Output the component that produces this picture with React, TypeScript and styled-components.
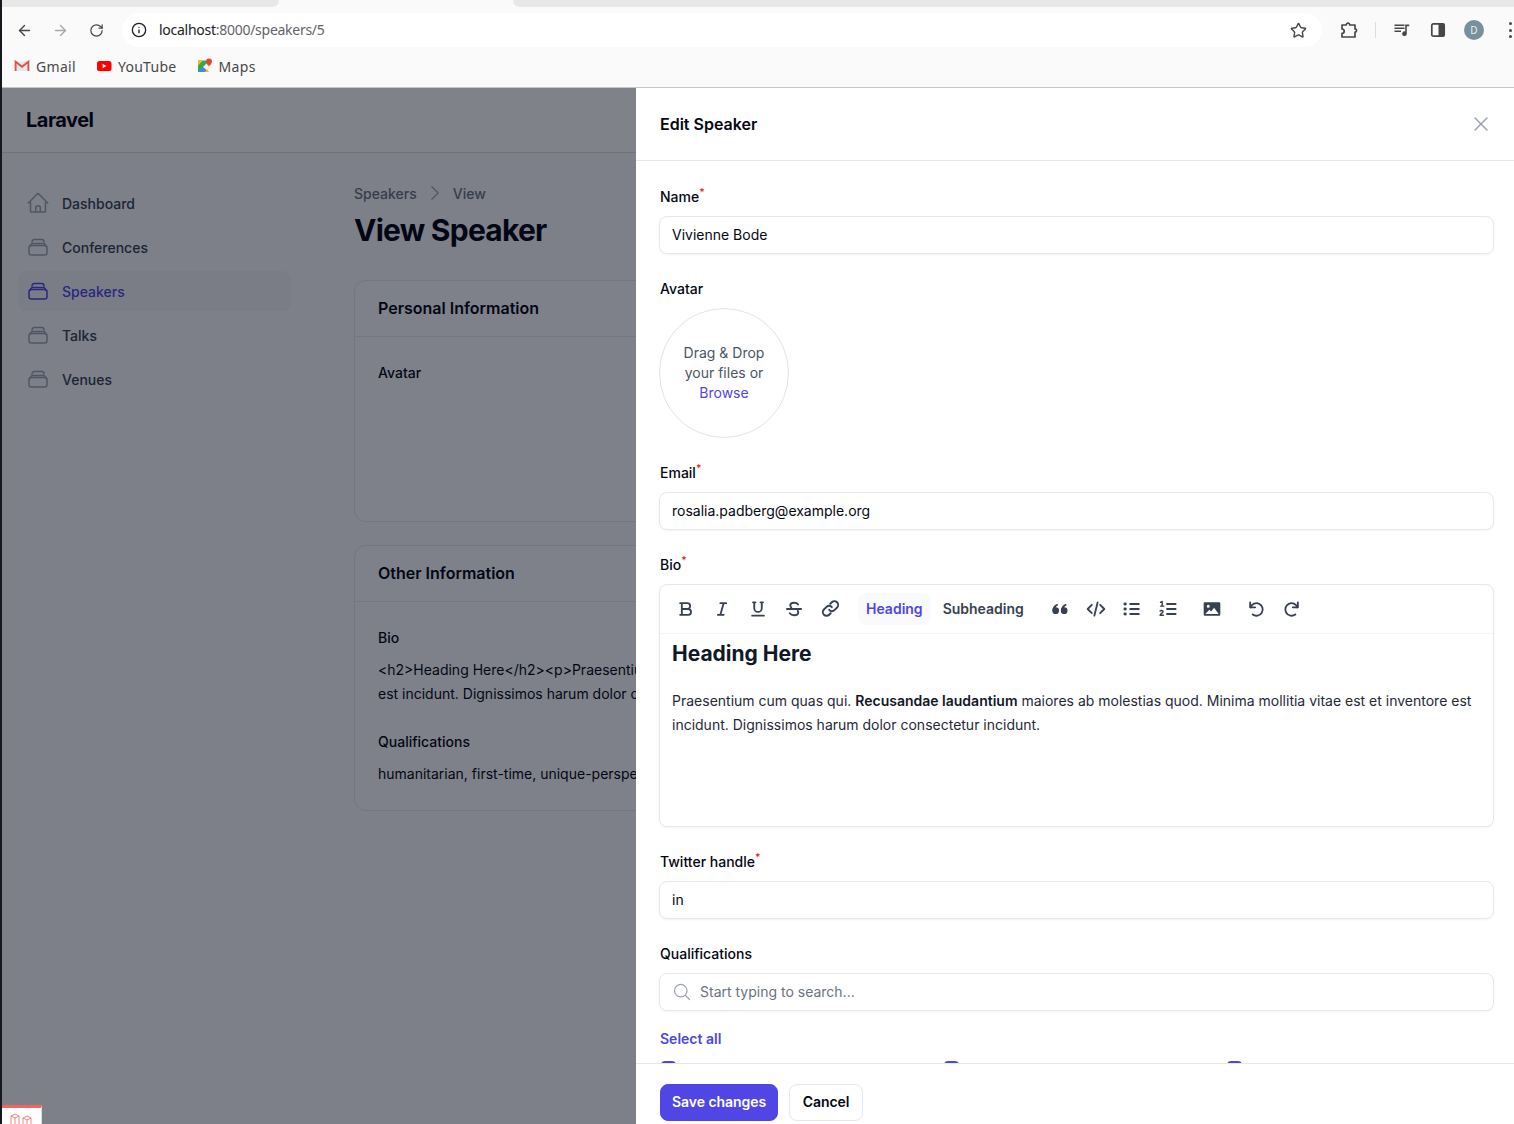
import styled, { createGlobalStyle } from 'styled-components'
import { ReactNode } from 'react'
import { ArrowLeft, ArrowRight, RotateCw, Info, Star } from 'lucide-react'
import {
    HiOutlineHome,
    HiOutlineXMark,
    HiOutlineMagnifyingGlass,
    HiOutlineChevronRight,
} from 'react-icons/hi2'

const GlobalStyle = createGlobalStyle`
    html, body {
        margin: 0;
        padding: 0;
        height: 100%;
        overflow: hidden;
        background: #16181d;
    }
    * {
        box-sizing: border-box;
    }
`

const Screen = styled.div`
    width: 1514px;
    height: 1124px;
    display: flex;
    flex-direction: column;
    overflow: hidden;
    border-left: 2px solid #16181d;
    font-family: Inter, "Liberation Sans", sans-serif;
    color: #030712;
`

/* browser chrome */
const TabStrip = styled.div`
    height: 7px;
    background: #fafafa;
    display: flex;
    justify-content: space-between;
    flex-shrink: 0;
`

const TabPiece = styled.div<{ $w: number; $right?: boolean }>`
    width: ${p => p.$w}px;
    height: 7px;
    background: #e8e8e8;
    border-radius: ${p => (p.$right ? '0 0 0 8px' : '0 0 8px 0')};
`

const Toolbar = styled.div`
    height: 46px;
    background: #fafafa;
    display: flex;
    align-items: center;
    padding: 6px 0 6px 4px;
    flex-shrink: 0;
`

const NavButton = styled.div<{ $muted?: boolean }>`
    width: 36px;
    height: 36px;
    display: flex;
    align-items: center;
    justify-content: center;
    color: ${p => (p.$muted ? '#a8a8a8' : '#474747')};
`

const Omnibox = styled.div`
    width: 1200px;
    height: 34px;
    margin-left: 8px;
    background: #ffffff;
    border-radius: 17px;
    display: flex;
    align-items: center;
    padding: 0 15px 0 9px;
    flex-shrink: 0;
`

const Url = styled.div`
    margin-left: 12px;
    padding-bottom: 2px;
    flex: 1;
    font-family: "Noto Sans", sans-serif;
    font-size: 14px;
    letter-spacing: -0.27px;
    color: #202124;

    span {
        color: #5f6368;
    }
`

const ExtIcons = styled.div`
    display: flex;
    align-items: center;
    margin-left: 9px;
    flex-shrink: 0;
`

const ChromeIcon = styled.div`
    width: 36px;
    height: 36px;
    display: flex;
    align-items: center;
    justify-content: center;
    color: #474747;
`

const Separator = styled.div`
    width: 1px;
    height: 16px;
    margin: 0 8px;
    background: #dcdcdc;
`

const Profile = styled.div`
    width: 20px;
    height: 20px;
    border-radius: 50%;
    background: #78909c;
    color: #e8eef0;
    font-family: "Noto Sans", sans-serif;
    font-size: 10px;
    display: flex;
    align-items: center;
    justify-content: center;
`

const Kebab = styled.div`
    width: 4px;
    height: 16px;
    margin-left: 16px;
    display: flex;
    flex-direction: column;
    justify-content: space-between;
    align-items: center;

    i {
        width: 3px;
        height: 3px;
        border-radius: 50%;
        background: #474747;
    }
`

const Bookmarks = styled.div`
    height: 35px;
    background: #fafafa;
    border-bottom: 1px solid #c6c6c6;
    display: flex;
    align-items: center;
    padding: 0 0 8px 12px;
    gap: 20px;
    flex-shrink: 0;
`

const Bookmark = styled.div`
    display: flex;
    align-items: center;
    gap: 6px;
    font-family: "Noto Sans", sans-serif;
    font-size: 14px;
    letter-spacing: 0.3px;
    color: #474747;
`

/* page behind the slide-over */
const Viewport = styled.div`
    position: relative;
    flex: 1;
    min-height: 0;
    overflow: hidden;
    background: #f7f8fa;
`

const Page = styled.div`
    height: 100%;
    display: flex;
    flex-direction: column;
`

const Topbar = styled.div`
    height: 65px;
    background: #fcfcfd;
    border-bottom: 1px solid #d9dadd;
    display: flex;
    align-items: center;
    padding: 0 24px 1px;
    font-size: 20px;
    font-weight: 700;
    letter-spacing: -0.5px;
    flex-shrink: 0;
`

const PageBody = styled.div`
    flex: 1;
    display: flex;
`

const Sidebar = styled.nav`
    width: 320px;
    padding: 30px 16px 0;
    display: flex;
    flex-direction: column;
    gap: 4px;
    flex-shrink: 0;
`

const NavItem = styled.div<{ $active?: boolean }>`
    width: 273px;
    height: 40px;
    border-radius: 8px;
    padding: 0 8px;
    display: flex;
    align-items: center;
    gap: 12px;
    font-size: 14px;
    font-weight: 500;
    color: ${p => (p.$active ? '#4f46e5' : '#374151')};
    background: ${p => (p.$active ? '#f2f3f5' : 'transparent')};

    svg {
        width: 24px;
        height: 24px;
        color: ${p => (p.$active ? '#4f46e5' : '#9ca3af')};
    }
`

const Main = styled.main`
    flex: 1;
    padding: 30px 32px 0;
    min-width: 0;
`

const Crumbs = styled.div`
    display: flex;
    align-items: center;
    gap: 8px;
    height: 20px;
    font-size: 14px;
    font-weight: 500;
    color: #6b7280;

    svg {
        width: 20px;
        height: 20px;
        color: #9ca3af;
    }
`

const Title = styled.h1`
    margin: 9px 0 0;
    font-size: 30px;
    line-height: 36px;
    font-weight: 700;
    letter-spacing: -0.75px;
    color: #030712;
`

const Card = styled.section<{ $h: number; $top: number }>`
    margin-top: ${p => p.$top}px;
    height: ${p => p.$h}px;
    width: 1126px;
    background: #fafbfc;
    border: 1px solid #e3e4e6;
    border-radius: 12px;
    overflow: hidden;
`

const CardHead = styled.div`
    height: 56px;
    border-bottom: 1px solid #e5e7eb;
    display: flex;
    align-items: center;
    padding: 0 23px 2px;
    font-size: 16px;
    font-weight: 600;
`

const CardBody = styled.div`
    padding: 26px 23px 0;
    font-size: 14px;
`

const ViewLabel = styled.div`
    font-weight: 500;
    line-height: 20px;
    margin-bottom: 10px;
`

const ViewText = styled.div`
    line-height: 24px;
    white-space: nowrap;
    color: #030712;
    margin-bottom: 26px;
`

const Backdrop = styled.div`
    position: absolute;
    inset: 0;
    background: rgba(3, 7, 24, 0.5);
`

const DebugTab = styled.div`
    position: absolute;
    left: 0;
    bottom: 0;
    width: 40px;
    height: 19px;
    background: #ffffff;
    border-top: 3px solid #f4645f;
    border-right: 1px solid #dcdce8;
    display: flex;
    align-items: flex-end;
    padding-left: 8px;
    gap: 2px;
    color: #f4645f;
`

/* slide-over */
const SlideOver = styled.aside`
    position: absolute;
    top: 0;
    right: 0;
    bottom: 0;
    width: 878px;
    background: #ffffff;
    display: flex;
    flex-direction: column;
`

const ModalHead = styled.header`
    height: 73px;
    border-bottom: 1px solid #e5e7eb;
    display: flex;
    align-items: center;
    justify-content: space-between;
    padding: 0 21px 1px 24px;
    flex-shrink: 0;
    font-size: 16px;
    font-weight: 600;

    svg {
        width: 24px;
        height: 24px;
        color: #9ca3af;
    }
`

const ModalBody = styled.div`
    flex: 1;
    min-height: 0;
    overflow: hidden;
    padding: 26px 20px 0 23px;
    display: flex;
    flex-direction: column;
    gap: 25px;
`

const Field = styled.div`
    display: flex;
    flex-direction: column;
`

const Label = styled.label`
    height: 20px;
    margin: 0 0 9px 1px;
    font-size: 14px;
    line-height: 20px;
    font-weight: 500;
    color: #030712;

    sup {
        color: #dc2626;
        font-size: 10.5px;
        line-height: 0;
        font-weight: 500;
    }
`

const Input = styled.div`
    height: 38px;
    border: 1px solid #e5e7eb;
    border-radius: 8px;
    box-shadow: 0 1px 2px rgba(0, 0, 0, 0.05);
    display: flex;
    align-items: center;
    gap: 8px;
    padding: 0 12px 2px;
    font-size: 14px;
    color: #030712;

    svg {
        width: 20px;
        height: 20px;
        margin-top: 2px;
        color: #9ca3af;
    }
`

const Placeholder = styled.span`
    color: #6b7280;
`

const Dropzone = styled.div`
    width: 130px;
    height: 130px;
    border-radius: 50%;
    border: 1px solid #e2e3e5;
    display: flex;
    flex-direction: column;
    align-items: center;
    justify-content: center;
    font-size: 14px;
    line-height: 20px;
    color: #4b5563;

    b {
        font-weight: 400;
        color: #4f46e5;
    }
`

const Editor = styled.div`
    height: 243px;
    border: 1px solid #e5e7eb;
    border-radius: 8px;
    box-shadow: 0 1px 2px rgba(0, 0, 0, 0.05);
    overflow: hidden;
`

const EditorBar = styled.div`
    height: 49px;
    border-bottom: 1px solid #f3f4f6;
    display: flex;
    align-items: center;
    padding: 0 0 1px 8px;
`

const ToolGroup = styled.div<{ $gap: number }>`
    display: flex;
    align-items: center;
    margin-right: ${p => p.$gap}px;
`

const Tool = styled.div`
    width: 36px;
    height: 32px;
    display: flex;
    align-items: center;
    justify-content: center;
    color: #374151;
`

const TextTool = styled.div<{ $active?: boolean }>`
    height: 32px;
    padding: 0 8px;
    border-radius: 8px;
    display: flex;
    align-items: center;
    font-size: 14px;
    font-weight: 600;
    margin-right: 4px;
    color: ${p => (p.$active ? '#4f46e5' : '#374151')};
    background: ${p => (p.$active ? '#f9fafb' : 'transparent')};
`

const EditorText = styled.div`
    padding: 4px 12px 0;
    font-size: 14px;
    line-height: 24px;
    color: #1f2937;

    h2 {
        margin: 0 0 19px;
        font-size: 21px;
        line-height: 32px;
        font-weight: 700;
        color: #111827;
    }

    p {
        margin: 0;
    }

    strong {
        font-weight: 600;
        color: #111827;
    }
`

const LinkAction = styled.div`
    margin: -7px 0 0 1px;
    height: 20px;
    font-size: 14px;
    line-height: 20px;
    font-weight: 600;
    color: #4f46e5;
`

const CheckRow = styled.div`
    margin: -13px 0 0 1px;
    display: grid;
    grid-template-columns: repeat(3, 283px);
`

const CheckBox = styled.div`
    width: 15px;
    height: 15px;
    margin-left: 1px;
    border-radius: 4px;
    background: #4f46e5;
`

const ModalFoot = styled.footer`
    height: 61px;
    background: #ffffff;
    border-top: 1px solid #e5e7eb;
    padding: 20px 24px 0;
    display: flex;
    align-items: flex-start;
    gap: 11px;
    flex-shrink: 0;
`

const Button = styled.div<{ $primary?: boolean }>`
    height: 37px;
    padding: 0 ${p => (p.$primary ? '11px' : '12.5px')} 2px;
    border-radius: 8px;
    display: flex;
    align-items: center;
    font-size: 14px;
    font-weight: 600;
    letter-spacing: -0.05px;
    color: ${p => (p.$primary ? '#ffffff' : '#030712')};
    background: ${p => (p.$primary ? '#4f46e5' : '#ffffff')};
    border: 1px solid ${p => (p.$primary ? '#4f46e5' : '#e5e7eb')};
`

const Glyph = ({ children, size = 20 }: { children: ReactNode; size?: number }) => (
    <svg width={size} height={size} viewBox="0 0 24 24" fill="none" stroke="currentColor" strokeWidth={2.2} strokeLinecap="round" strokeLinejoin="round">
        {children}
    </svg>
)

const Stack = () => (
    <svg viewBox="0 0 24 24" fill="none" stroke="currentColor" strokeWidth={1.5} strokeLinecap="round" strokeLinejoin="round">
        <path d="M6 6.9V6.75A2.25 2.25 0 0 1 8.25 4.5h7.5A2.25 2.25 0 0 1 18 6.75v.15M4.5 10.9v-.15A2.25 2.25 0 0 1 6.75 8.5h10.5a2.25 2.25 0 0 1 2.25 2.25v.15" />
        <rect x="3" y="10.5" width="18" height="9.5" rx="2.25" />
    </svg>
)

const GmailIcon = () => (
    <svg width="16" height="16" viewBox="0 0 16 16">
        <path d="M2 3.5h12V13H2z" fill="#e8e8e8" />
        <path d="M1.6 13V3.8L8 8.8l6.4-5V13" fill="none" stroke="#e0524a" strokeWidth="1.9" />
    </svg>
)

const YoutubeIcon = () => (
    <svg width="16" height="16" viewBox="0 0 16 16">
        <rect x="1" y="3" width="14.5" height="10" rx="2.6" fill="#ff0000" />
        <path d="M6.6 5.8v4.4L10.4 8z" fill="#ffffff" />
    </svg>
)

const MapsIcon = () => (
    <svg width="16" height="16" viewBox="0 0 16 16">
        <path d="M1 2.5h9V14H1z" fill="#34a853" />
        <path d="M1 14l5-5 5 5z" fill="#4285f4" />
        <path d="M1 2.5h5l-5 5z" fill="#fbbc04" />
        <path d="M6 9l6-6v11z" fill="#f1f1f1" />
        <path d="M10 11l2 3H8z" fill="#fbbc04" />
        <path d="M12 .5a3 3 0 0 0-3 3c0 2.1 3 4.7 3 4.7s3-2.6 3-4.7a3 3 0 0 0-3-3z" fill="#ea4335" />
    </svg>
)

const App = () => {
    return (
        <Screen>
            <GlobalStyle />
            <TabStrip>
                <TabPiece $w={277} />
                <TabPiece $w={1001} $right />
            </TabStrip>
            <Toolbar>
                <NavButton><ArrowLeft size={17} strokeWidth={2} /></NavButton>
                <NavButton $muted><ArrowRight size={17} strokeWidth={2} /></NavButton>
                <NavButton><RotateCw size={15} strokeWidth={2} /></NavButton>
                <Omnibox>
                    <Info size={16} color="#202124" strokeWidth={2} />
                    <Url>localhost<span>:8000/speakers/5</span></Url>
                    <Star size={17} color="#474747" strokeWidth={2} />
                </Omnibox>
                <ExtIcons>
                    <ChromeIcon>
                        <svg width="18" height="18" viewBox="0 0 18 18" fill="none" stroke="currentColor" strokeWidth="1.7" strokeLinejoin="round">
                            <path d="M2 4h4.2a1.8 1.8 0 1 1 3.6 0H15v4a1.6 1.6 0 1 1 0 3.2V16H2v-3.6a2.2 2.2 0 0 0 0-4.4z" />
                        </svg>
                    </ChromeIcon>
                    <Separator />
                    <ChromeIcon>
                        <svg width="18" height="18" viewBox="0 0 18 18" fill="currentColor">
                            <path d="M1.5 3.5h10v1.4h-10zM1.5 6.5h10v1.4h-10zM1.5 9.5H8v1.4H1.5z" />
                            <path d="M12.2 3.5h4v1.8h-2.4v7.4a2.3 2.3 0 1 1-1.6-2.2z" />
                        </svg>
                    </ChromeIcon>
                    <ChromeIcon>
                        <svg width="18" height="18" viewBox="0 0 18 18">
                            <rect x="2.8" y="2.8" width="12.4" height="12.4" rx="1.5" fill="none" stroke="currentColor" strokeWidth="1.7" />
                            <path d="M9.5 2.5h5a1 1 0 0 1 1 1v11a1 1 0 0 1-1 1h-5z" fill="currentColor" />
                        </svg>
                    </ChromeIcon>
                    <ChromeIcon><Profile>D</Profile></ChromeIcon>
                    <Kebab><i /><i /><i /></Kebab>
                </ExtIcons>
            </Toolbar>
            <Bookmarks>
                <Bookmark><GmailIcon />Gmail</Bookmark>
                <Bookmark><YoutubeIcon />YouTube</Bookmark>
                <Bookmark><MapsIcon />Maps</Bookmark>
            </Bookmarks>
            <Viewport>
                <Page>
                    <Topbar>Laravel</Topbar>
                    <PageBody>
                        <Sidebar>
                            <NavItem><HiOutlineHome />Dashboard</NavItem>
                            <NavItem><Stack />Conferences</NavItem>
                            <NavItem $active><Stack />Speakers</NavItem>
                            <NavItem><Stack />Talks</NavItem>
                            <NavItem><Stack />Venues</NavItem>
                        </Sidebar>
                        <Main>
                            <Crumbs>Speakers<HiOutlineChevronRight />View</Crumbs>
                            <Title>View Speaker</Title>
                            <Card $top={32} $h={242}>
                                <CardHead>Personal Information</CardHead>
                                <CardBody>
                                    <ViewLabel>Avatar</ViewLabel>
                                </CardBody>
                            </Card>
                            <Card $top={23} $h={266}>
                                <CardHead>Other Information</CardHead>
                                <CardBody>
                                    <ViewLabel>Bio</ViewLabel>
                                    <ViewText>
                                        &lt;h2&gt;Heading Here&lt;/h2&gt;&lt;p&gt;Praesentium cum quas qui.
                                        <br />
                                        est incidunt. Dignissimos harum dolor consectetur incidunt.
                                    </ViewText>
                                    <ViewLabel>Qualifications</ViewLabel>
                                    <ViewText>humanitarian, first-time, unique-perspective</ViewText>
                                </CardBody>
                            </Card>
                        </Main>
                    </PageBody>
                </Page>
                <Backdrop />
                <DebugTab>
                    <svg width="10" height="11" viewBox="0 0 10 11" fill="none" stroke="currentColor" strokeWidth="0.8"><path d="M1 11V3l4-2 4 2v8M1 3l4 2 4-2M5 5v6" /></svg>
                    <svg width="10" height="9" viewBox="0 0 10 9" fill="none" stroke="currentColor" strokeWidth="0.8"><path d="M1 9V3l4-2 4 2v6M1 3l4 2 4-2M5 5v4" /></svg>
                </DebugTab>
                <SlideOver>
                    <ModalHead>
                        Edit Speaker
                        <HiOutlineXMark />
                    </ModalHead>
                    <ModalBody>
                        <Field>
                            <Label>Name<sup>*</sup></Label>
                            <Input>Vivienne Bode</Input>
                        </Field>
                        <Field>
                            <Label>Avatar</Label>
                            <Dropzone>
                                <span>Drag &amp; Drop</span>
                                <span>your files or</span>
                                <b>Browse</b>
                            </Dropzone>
                        </Field>
                        <Field>
                            <Label>Email<sup>*</sup></Label>
                            <Input>rosalia.padberg@example.org</Input>
                        </Field>
                        <Field>
                            <Label>Bio<sup>*</sup></Label>
                            <Editor>
                                <EditorBar>
                                    <ToolGroup $gap={10}>
                                        <Tool><Glyph><path d="M7 5h6.5a3.5 3.5 0 0 1 0 7H7zM7 12h7.5a3.5 3.5 0 0 1 0 7H7zM5 5h2M5 19h2" /></Glyph></Tool>
                                        <Tool><Glyph><path d="M10 5h7M7 19h7M14 5l-4 14" /></Glyph></Tool>
                                        <Tool><Glyph><path d="M6 4h3M15 4h3M7.5 4v7a4.5 4.5 0 0 0 9 0V4M5 20h14" /></Glyph></Tool>
                                        <Tool><Glyph><path d="M17 6.5C16 5 14.4 4.5 12 4.5c-2.8 0-4.5 1.3-4.5 3.2 0 1 .4 1.8 1.3 2.3M3.5 12h17M16.5 14c.4.6.6 1.2.6 1.9 0 2.2-2 3.6-5 3.6-2.5 0-4.2-.8-5.2-2.3" /></Glyph></Tool>
                                        <Tool><Glyph size={21}><path d="M10.5 13.5a4 4 0 0 0 6 .4l3-3a4.2 4.2 0 0 0-6-6l-1.7 1.700" /><path d="M13.5 10.5a4 4 0 0 0-6-.4l-3 3a4.2 4.2 0 0 0 6 6l1.7-1.7" /></Glyph></Tool>
                                    </ToolGroup>
                                    <ToolGroup $gap={6}>
                                        <TextTool $active>Heading</TextTool>
                                        <TextTool>Subheading</TextTool>
                                    </ToolGroup>
                                    <ToolGroup $gap={8}>
                                        <Tool>
                                            <svg width="20" height="20" viewBox="0 0 24 24" fill="currentColor">
                                                <circle cx="6.8" cy="14" r="4" />
                                                <path d="M2.8 14C2.8 9.8 5.5 7 9 5.8l.7 1.7C7.5 8.5 6.4 10.2 6.4 12z" />
                                                <circle cx="17" cy="14" r="4" />
                                                <path d="M13 14c0-4.2 2.7-7 6.2-8.2l.7 1.7c-2.2 1-3.3 2.7-3.3 4.5z" />
                                            </svg>
                                        </Tool>
                                        <Tool><Glyph><path d="M7 7l-5 5 5 5M17 7l5 5-5 5M14 4l-4 16" /></Glyph></Tool>
                                        <Tool>
                                            <Glyph>
                                                <path d="M9 6h12M9 12h12M9 18h12" strokeLinecap="butt" />
                                                <path d="M3.5 6H4M3.5 12H4M3.5 18H4" strokeWidth={3.5} />
                                            </Glyph>
                                        </Tool>
                                        <Tool>
                                            <Glyph>
                                                <path d="M10 6h12M10 12h12M10 18h12" strokeLinecap="butt" />
                                                <path d="M3 4l2-1v5M3 8.5h4M2.5 14.5c.5-1 3.5-1 3.5.7 0 1.3-3.500 2.300-3.500 4.300h4" strokeWidth={1.7} />
                                            </Glyph>
                                        </Tool>
                                    </ToolGroup>
                                    <ToolGroup $gap={8}>
                                        <Tool>
                                            <svg width="20" height="20" viewBox="0 0 24 24" fill="currentColor">
                                                <path fillRule="evenodd" d="M3.5 4h17A1.5 1.5 0 0 1 22 5.5v13a1.5 1.5 0 0 1-1.5 1.5h-17A1.5 1.5 0 0 1 2 18.5v-13A1.5 1.5 0 0 1 3.5 4zM7.5 7a1.8 1.8 0 1 0 0 3.600 1.800 1.800 0 0 0 0-3.600zM4 18h16l-5.500-7.500-3.500 4.500-2.200-2z" />
                                            </svg>
                                        </Tool>
                                    </ToolGroup>
                                    <ToolGroup $gap={0}>
                                        <Tool><Glyph><path d="M5 4v6h6" /><path d="M5.5 10A7.5 7.5 0 1 1 8 18.5" /></Glyph></Tool>
                                        <Tool><Glyph><path d="M19 4v6h-6" /><path d="M18.5 10A7.5 7.5 0 1 0 16 18.5" /></Glyph></Tool>
                                    </ToolGroup>
                                </EditorBar>
                                <EditorText>
                                    <h2>Heading Here</h2>
                                    <p>
                                        Praesentium cum quas qui. <strong>Recusandae laudantium</strong> maiores ab molestias quod. Minima mollitia vitae est et inventore est incidunt. Dignissimos harum dolor consectetur incidunt.
                                    </p>
                                </EditorText>
                            </Editor>
                        </Field>
                        <Field>
                            <Label>Twitter handle<sup>*</sup></Label>
                            <Input>in</Input>
                        </Field>
                        <Field>
                            <Label>Qualifications</Label>
                            <Input>
                                <HiOutlineMagnifyingGlass />
                                <Placeholder>Start typing to search...</Placeholder>
                            </Input>
                        </Field>
                        <LinkAction>Select all</LinkAction>
                        <CheckRow>
                            <CheckBox />
                            <CheckBox />
                            <CheckBox />
                        </CheckRow>
                    </ModalBody>
                    <ModalFoot>
                        <Button $primary>Save changes</Button>
                        <Button>Cancel</Button>
                    </ModalFoot>
                </SlideOver>
            </Viewport>
        </Screen>
    )
}

export default App
